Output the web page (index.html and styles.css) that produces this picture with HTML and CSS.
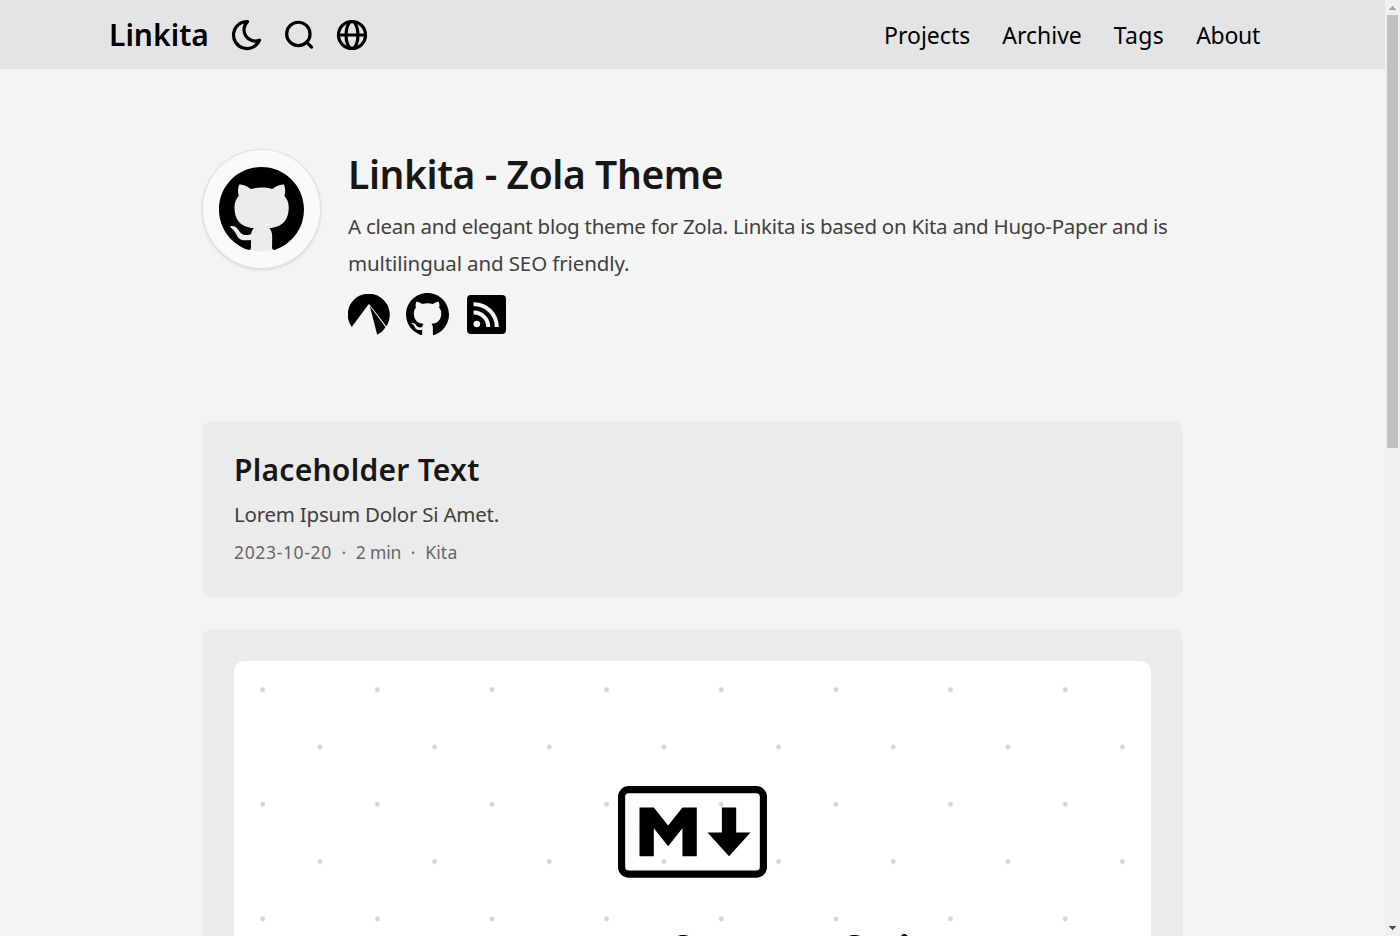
FILE: index.html
```html
<!DOCTYPE html>
<html lang="en">
<head>
<meta charset="utf-8">
<title>Linkita - Zola Theme</title>
<link rel="stylesheet" href="styles.css">
</head>
<body>
<div class="page">
  <header class="header">
    <div class="header-left">
      <a class="brand">Linkita</a>
      <svg class="tool" viewBox="0 0 24 24"><path d="M12 3c.132 0 .263 0 .393 0a7.5 7.5 0 0 0 7.92 12.446a9 9 0 1 1 -8.313 -12.454z"/></svg>
      <svg class="tool" viewBox="0 0 24 24"><circle cx="10.9" cy="11.3" r="7.8"/><path d="M16.5 16.9l3.2 3.2"/></svg>
      <svg class="tool" viewBox="0 0 24 24"><circle cx="12" cy="12" r="9"/><ellipse cx="12" cy="12" rx="4" ry="9"/><path d="M3 12h18"/></svg>
    </div>
    <nav class="nav"><a class="n1">Projects</a><a class="n2">Archive</a><a class="n3">Tags</a><a class="n4">About</a></nav>
  </header>
  <main class="main">
    <section class="profile">
      <div class="avatar">
        <svg viewBox="0 0 16 16"><circle class="avatar-cat" cx="8" cy="8" r="7.9"/><path id="octo" d="M8 0C3.58 0 0 3.58 0 8c0 3.54 2.29 6.53 5.47 7.59.4.07.55-.17.55-.38 0-.19-.01-.82-.01-1.49-2.01.37-2.53-.49-2.69-.94-.09-.23-.48-.94-.82-1.13-.28-.15-.68-.52-.01-.53.63-.01 1.08.58 1.23.82.72 1.21 1.87.87 2.33.66.07-.52.28-.87.51-1.07-1.78-.2-3.64-.89-3.64-3.95 0-.87.31-1.59.82-2.15-.08-.2-.36-1.02.08-2.12 0 0 .67-.21 2.2.82.64-.18 1.32-.27 2-.27s1.36.09 2 .27c1.53-1.04 2.2-.82 2.2-.82.44 1.1.16 1.92.08 2.12.51.56.82 1.27.82 2.15 0 3.07-1.87 3.75-3.65 3.95.29.25.54.73.54 1.48 0 1.07-.01 1.93-.01 2.2 0 .21.15.46.55.38A8.01 8.01 0 0 0 16 8c0-4.42-3.58-8-8-8z"/></svg>
      </div>
      <div class="intro">
        <h1 class="title">Linkita - Zola Theme</h1>
        <p class="bio"><span class="bio-a">A clean and elegant blog theme for Zola. Linkita is based on Kita and Hugo-Paper and is</span><br><span class="bio-b">multilingual and SEO friendly.</span></p>
        <div class="social">
          <svg class="codeberg" viewBox="0 0 42 42"><path d="M3.7 33A21 21 0 1 1 38.3 32.2L21.6 10.6Q21 9.8 20.4 10.6Z"/><path d="M21.8 12L37.6 33.2A21 21 0 0 1 29.2 40.8Z"/></svg>
          <svg class="github" viewBox="0 0 16 16"><use href="#octo"/></svg>
          <svg class="rss" viewBox="0 0 39 39"><rect width="39" height="39" rx="4"/><circle class="cut" cx="9.8" cy="29" r="3.3"/><path class="wave" d="M6.5 17.6A14.3 14.3 0 0 1 21.2 32M6.5 9.2A22.8 22.8 0 0 1 29.8 32"/></svg>
        </div>
      </div>
    </section>
    <article class="card">
      <h2 class="card-title">Placeholder Text</h2>
      <p class="summary">Lorem Ipsum Dolor Si Amet.</p>
      <div class="meta"><span class="date">2023-10-20</span><span class="dot">·</span><span class="time">2 min</span><span class="dot">·</span><span class="author">Kita</span></div>
    </article>
    <article class="card">
      <svg class="cover" viewBox="0 0 917 458">
        <defs><pattern id="dots" width="114.64" height="114.64" patternUnits="userSpaceOnUse"><circle class="grid-dot" cx="28.66" cy="28.66" r="2.4"/><circle class="grid-dot" cx="85.98" cy="85.98" r="2.4"/></pattern></defs>
        <rect class="paper" width="917" height="458"/>
        <rect width="917" height="458" fill="url(#dots)"/>
        <g transform="translate(384 125) scale(.7163)"><rect class="md-frame" x="5" y="5" width="198" height="118" rx="10"/><path d="M30 98V30h20l20 25 20-25h20v68H90V59L70 84 50 59v39zm125 0l-30-33h20V30h20v35h20z"/></g>
        <text class="cover-title" y="308"><tspan x="205">Markdown</tspan><tspan x="434" dy="-1">S</tspan><tspan dy="1">yntax</tspan><tspan x="603" dy="-1">G</tspan><tspan dy="1">uide</tspan></text>
      </svg>
    </article>
  </main>
</div>
<div class="scrollbar">
  <svg class="arrow up" viewBox="0 0 7 4"><path d="M3 0h1v1h1v1h1v1h1v1H0V3h1V2h1V1h1z"/></svg>
  <div class="thumb"></div>
  <svg class="arrow down" viewBox="0 0 7 4"><path d="M0 0h7v1H6v1H5v1H4v1H3V3H2V2H1V1H0z"/></svg>
</div>
</body>
</html>
```
FILE: styles.css
```css
* { box-sizing: border-box; margin: 0; }
html, body { height: 100%; overflow: hidden; }
body { display: flex; background: #f4f4f4; color: #000; font-family: "Noto Sans", sans-serif; }
svg { display: block; }
.page { flex: 1; height: 936px; overflow: hidden; }
.header { display: flex; justify-content: space-between; height: 69px; padding: 0 125px 0 109px; background: #e4e4e6; }
.header-left { display: flex; align-items: center; }
.brand { width: 120px; font-size: 30px; font-weight: 600; line-height: 71px; white-space: nowrap; }
.tool { width: 36px; height: 36px; margin-right: 16.5px; margin-top: 1px; fill: none; stroke: #000; stroke-width: 2.15; stroke-linecap: round; stroke-linejoin: round; }
.nav { display: flex; gap: 32px; font-size: 23px; line-height: 71px; white-space: nowrap; }
.n3 { letter-spacing: .35px; }
.n4 { letter-spacing: -.3px; }
.main { width: 981px; margin: 0 auto 0 202px; }
.profile { display: flex; gap: 27px; height: 352px; padding-top: 80px; }
.avatar { flex: none; display: grid; place-items: center; width: 119px; height: 120px; border: 1px solid #e2e2e2; border-radius: 50%; background: #fafafa; box-shadow: 0 1px 3px #0000001f; }
.avatar svg { width: 85px; height: 85px; }
.avatar-cat { fill: #ececec; }
.intro { flex: 1; min-width: 0; white-space: nowrap; }
.title { font-size: 39px; font-weight: 600; line-height: 50px; letter-spacing: -.4px; color: #171717; }
.bio { margin-top: 9px; font-size: 20.5px; line-height: 37px; color: #404040; }
.bio-a { letter-spacing: -.255px; }
.bio-b { letter-spacing: -.11px; }
.social { display: flex; align-items: center; margin-top: 11px; }
.codeberg { width: 42px; height: 42px; margin-right: 16px; }
.github { width: 43px; height: 43px; margin-right: 18px; }
.rss { width: 39px; height: 39px; }
.cut { fill: #f4f4f4; }
.wave { fill: none; stroke: #f4f4f4; stroke-width: 4; }
.card { padding: 32px; margin-bottom: 32px; border-radius: 10px; background: #ebebeb; white-space: nowrap; }
.card-title { font-size: 30px; font-weight: 600; line-height: 34px; letter-spacing: .27px; color: #171717; }
.summary { margin-top: 9px; font-size: 20.5px; line-height: 36px; letter-spacing: -.24px; color: #404040; }
.meta { display: flex; margin-top: 4px; height: 29px; font-size: 17.5px; line-height: 32px; color: #666; }
.date { letter-spacing: .65px; }
.time { letter-spacing: -.2px; }
.author { letter-spacing: .2px; }
.dot { width: 24px; text-align: center; }
.cover { width: 917px; height: 458px; border-radius: 10px; }
.paper { fill: #fff; }
.grid-dot { fill: #d3d3d3; }
.md-frame { fill: none; stroke: #000; stroke-width: 10; }
.cover-title { font: 600 45px Inter, sans-serif; }
.scrollbar { display: flex; flex-direction: column; align-items: center; width: 15px; height: 936px; padding: 6px 2px 6px 1px; background: #f0f0f0; }
.arrow { width: 7px; height: 4px; shape-rendering: crispEdges; }
.up { fill: #a3a3a3; }
.down { margin-top: auto; fill: #505050; }
.thumb { width: 11px; height: 433px; margin-top: 5px; background: #c1c1c1; }
```
